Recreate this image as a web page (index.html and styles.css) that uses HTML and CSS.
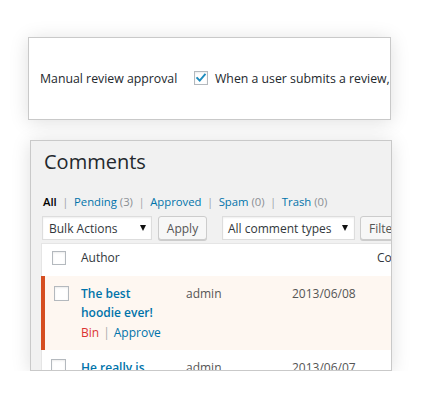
FILE: index.html
```html
<!DOCTYPE html>
<html lang="en">
<head>
<meta charset="utf-8">
<title>Comments</title>
<link rel="stylesheet" href="styles.css">
</head>
<body>
<div class="stage">
  <section class="panel settings">
    <div class="setting-row">
      <span class="setting-label">Manual review approval</span>
      <span class="cb checked"><svg viewBox="0 0 14 14" width="12" height="12"><polyline points="2.5,7 5.5,10 11.5,3" fill="none" stroke="#1e8cbe" stroke-width="2.2" stroke-linecap="square"/></svg></span>
      <span class="setting-text">When a user submits a review, it must be manually approved</span>
    </div>
  </section>

  <section class="panel comments">
    <h1 class="title">Comments</h1>
    <div class="filters">
      <a class="filter current">All</a><span class="sep">|</span><a class="filter">Pending <span class="count">(3)</span></a><span class="sep">|</span><a class="filter">Approved</a><span class="sep">|</span><a class="filter">Spam <span class="count">(0)</span></a><span class="sep">|</span><a class="filter">Trash <span class="count">(0)</span></a>
    </div>
    <div class="tablenav">
      <div class="select bulk"><span>Bulk Actions</span><i class="arrow"></i></div>
      <button class="btn apply">Apply</button>
      <div class="select types"><span>All comment types</span><i class="arrow"></i></div>
      <button class="btn filter-btn">Filter</button>
    </div>
    <div class="table">
      <div class="row head">
        <div class="c-check"><span class="cb"></span></div>
        <div class="c-author">Author</div>
        <div class="c-user"></div>
        <div class="c-date"></div>
        <div class="c-comment">Comment</div>
      </div>
      <div class="row unapproved">
        <div class="c-check"><span class="cb"></span></div>
        <div class="c-author">
          <a class="review-title">The best hoodie ever!</a>
          <div class="row-actions"><a class="bin">Bin</a><span class="pipe">|</span><a class="approve">Approve</a></div>
        </div>
        <div class="c-user">admin</div>
        <div class="c-date">2013/06/08</div>
        <div class="c-comment"></div>
      </div>
      <div class="row">
        <div class="c-check"><span class="cb"></span></div>
        <div class="c-author"><a class="review-title">He really is the best</a></div>
        <div class="c-user">admin</div>
        <div class="c-date">2013/06/07</div>
        <div class="c-comment"></div>
      </div>
    </div>
  </section>
</div>
</body>
</html>
```

FILE: styles.css
```css
html, body {
  margin: 0;
  background: #ffffff;
}

body {
  font-family: "Open Sans", "DejaVu Sans", sans-serif;
  color: #32373c;
}

.stage {
  padding: 37px 0 0 28px;
}

.panel {
  box-sizing: border-box;
  border: 1px solid #c9c9c9;
  box-shadow: 0 2px 18px rgba(0, 0, 0, 0.13);
  overflow: hidden;
}

/* ---------- settings panel ---------- */
.settings {
  width: 363px;
  height: 83px;
  background: #ffffff;
  display: flex;
  align-items: center;
  padding-left: 11px;
}

.setting-row {
  display: flex;
  align-items: center;
  white-space: nowrap;
  font-size: 12.3px;
  line-height: 18px;
  color: #23282d;
}

.setting-label {
  width: 154px;
  flex: none;
}

.cb {
  box-sizing: border-box;
  display: inline-flex;
  align-items: center;
  justify-content: center;
  width: 15px;
  height: 15px;
  border: 1px solid #b4b9be;
  background: #ffffff;
  box-shadow: inset 0 1px 2px rgba(0, 0, 0, 0.08);
  flex: none;
}

.setting-row .cb {
  width: 14px;
  height: 14px;
  margin-right: 7px;
  margin-bottom: 2px;
}

/* ---------- comments panel ---------- */
.comments {
  margin: 20px 0 0 2px;
  width: 362px;
  height: 231px;
  background: #f1f1f1;
  padding: 7px 0 0 10px;
}

.title {
  margin: 0 0 0 3px;
  font-size: 20px;
  line-height: 28px;
  font-weight: 400;
  color: #23282d;
  white-space: nowrap;
}

.filters {
  margin: 17px 0 0 2px;
  font-size: 11.3px;
  line-height: 18px;
  white-space: nowrap;
  color: #0073aa;
}

.filter {
  color: #0073aa;
}

.filter.current {
  color: #000000;
  font-weight: 600;
}

.count {
  color: #8a8f94;
}

.sep {
  color: #a0a5aa;
  margin: 0 5.5px;
}

.tablenav {
  margin-top: 5px;
  display: flex;
  height: 24px;
  white-space: nowrap;
}

.select {
  box-sizing: border-box;
  height: 24px;
  border: 1px solid #dddddd;
  background: #ffffff;
  box-shadow: inset 0 1px 2px rgba(0, 0, 0, 0.07);
  display: flex;
  align-items: center;
  justify-content: space-between;
  font-size: 12px;
  color: #32373c;
  flex: none;
}

.bulk {
  margin-left: 1px;
  width: 110px;
  padding: 0 5px 0 6px;
}

.types {
  margin-left: 15px;
  width: 133px;
  padding: 0 6px 0 5px;
}

.arrow {
  width: 0;
  height: 0;
  border-left: 3px solid transparent;
  border-right: 3px solid transparent;
  border-top: 6px solid #111111;
}

.btn {
  box-sizing: border-box;
  height: 24px;
  border: 1px solid #cccccc;
  border-radius: 3px;
  background: #f7f7f7;
  box-shadow: 0 1px 0 #cccccc;
  font-family: "Open Sans", "DejaVu Sans", sans-serif;
  font-size: 12px;
  color: #555555;
  padding: 0;
  flex: none;
}

.apply {
  margin-left: 6px;
  width: 49px;
}

.filter-btn {
  margin-left: 5px;
  width: 60px;
  text-align: left;
  padding-left: 8px;
}

/* ---------- table ---------- */
.table {
  margin-top: 3px;
  width: 520px;
  background: #ffffff;
  border-top: 1px solid #e5e5e5;
  font-size: 12px;
}

.row {
  display: grid;
  grid-template-columns: 39px 105px 106px 85px 1fr;
  border-left: 1px solid #e5e5e5;
  padding: 8px 0;
  line-height: 19px;
  white-space: nowrap;
}

.row.head {
  padding: 5px 0 6px;
  line-height: 18px;
  color: #32373c;
}

.row .c-check {
  padding-left: 9px;
}

.row .c-check .cb {
  margin-top: 1px;
}

.row.head .c-check {
  padding-left: 10px;
}

.row.head .c-check .cb {
  margin-top: 2px;
  width: 14px;
  height: 14px;
}

.row.unapproved {
  background: #fef7f1;
  border-left: 4px solid #d54e21;
  grid-template-columns: 36px 105px 106px 85px 1fr;
}

.row.unapproved .c-check .cb {
  margin-top: 2px;
}

.c-author {
  white-space: normal;
  width: 84px;
}

.review-title {
  color: #0073aa;
  font-weight: 600;
  display: block;
}

.c-user,
.c-date {
  color: #555555;
}

.row-actions {
  margin-top: 1px;
  white-space: nowrap;
}

.bin {
  color: #dc3232;
}

.pipe {
  color: #aaaaaa;
  margin: 0 4px;
}

.approve {
  color: #0073aa;
}
```
